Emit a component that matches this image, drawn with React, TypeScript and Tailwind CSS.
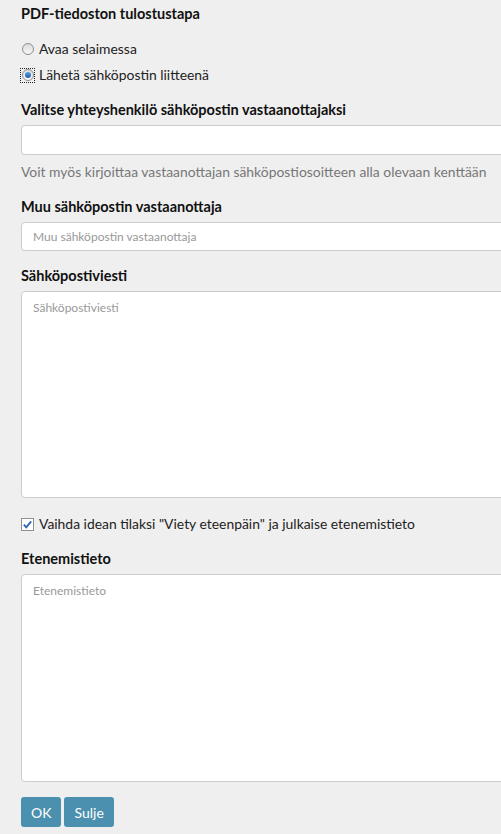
import { useState } from "react"

function Radio({ checked, onClick, label }: { checked: boolean; onClick: () => void; label: string }) {
  return (
    <label className="flex h-[20px] cursor-pointer items-center gap-[5px]" onClick={onClick}>
      <span
        className={`relative flex h-[13px] w-[13px] items-center justify-center ${
          checked ? "outline-1 outline-dotted outline-[#222]" : ""
        }`}
      >
        <span className="flex h-[12px] w-[12px] items-center justify-center rounded-full border border-[#8f8f8f] bg-gradient-to-b from-[#dcdcdc] to-[#f7f7f7]">
          {checked && (
            <span className="h-[6px] w-[6px] rounded-full bg-gradient-to-b from-[#5aa0e6] to-[#1d5fa8]" />
          )}
        </span>
      </span>
      <span>{label}</span>
    </label>
  )
}

export default function App() {
  const [mode, setMode] = useState("email")
  const [publish, setPublish] = useState(true)

  const label = "block text-[14.5px] font-bold text-[#111] leading-[20px]"
  const field =
    "block w-[500px] rounded-[4px] border border-[#cccccc] bg-white px-[11px] text-[12px] text-[#333] placeholder:text-[#999] outline-none"

  return (
    <div className="min-h-[834px] w-[501px] overflow-hidden bg-[#efefef] font-['Lato',sans-serif] text-[13.9px] text-[#222]">
      <div className="pl-[21px] pt-[4px]">
        <div className={label}>PDF-tiedoston tulostustapa</div>

        <div className="mt-[15px] flex flex-col gap-[6px]">
          <Radio checked={mode === "browser"} onClick={() => setMode("browser")} label="Avaa selaimessa" />
          <Radio checked={mode === "email"} onClick={() => setMode("email")} label="Lähetä sähköpostin liitteenä" />
        </div>

        <div className={`${label} mt-[15px]`}>Valitse yhteyshenkilö sähköpostin vastaanottajaksi</div>
        <input type="text" className={`${field} mt-[5px] h-[30px]`} />
        <p className="mt-[7px] leading-[20px] text-[#777]">
          Voit myös kirjoittaa vastaanottajan sähköpostiosoitteen alla olevaan kenttään
        </p>

        <div className={`${label} mt-[15px]`}>Muu sähköpostin vastaanottaja</div>
        <input
          type="text"
          placeholder="Muu sähköpostin vastaanottaja"
          className={`${field} mt-[5px] h-[29px]`}
        />

        <div className={`${label} mt-[15px]`}>Sähköpostiviesti</div>
        <textarea
          placeholder="Sähköpostiviesti"
          className={`${field} mt-[5px] h-[207px] resize-none py-[7px]`}
        />

        <label className="mt-[16px] flex h-[20px] cursor-pointer items-center gap-[5px]" onClick={() => setPublish(!publish)}>
          <span className="flex h-[13px] w-[13px] items-center justify-center border border-[#8f8f8f] bg-white">
            {publish && (
              <svg viewBox="0 0 12 12" className="h-[11px] w-[11px]">
                <path d="M2 6.2 L4.6 9 L10 2.6" fill="none" stroke="#2f63b8" strokeWidth="2" />
              </svg>
            )}
          </span>
          <span>Vaihda idean tilaksi "Viety eteenpäin" ja julkaise etenemistieto</span>
        </label>

        <div className={`${label} mt-[15px]`}>Etenemistieto</div>
        <textarea
          placeholder="Etenemistieto"
          className={`${field} mt-[5px] h-[208px] resize-none py-[7px]`}
        />

        <div className="mt-[15px] flex gap-[3px] pb-[8px]">
          <button className="h-[30px] rounded-[3px] bg-[#4b90ae] px-[10px] text-[14px] text-white">OK</button>
          <button className="h-[30px] rounded-[3px] bg-[#4b90ae] px-[10px] text-[14px] text-white">Sulje</button>
        </div>
      </div>
    </div>
  )
}
